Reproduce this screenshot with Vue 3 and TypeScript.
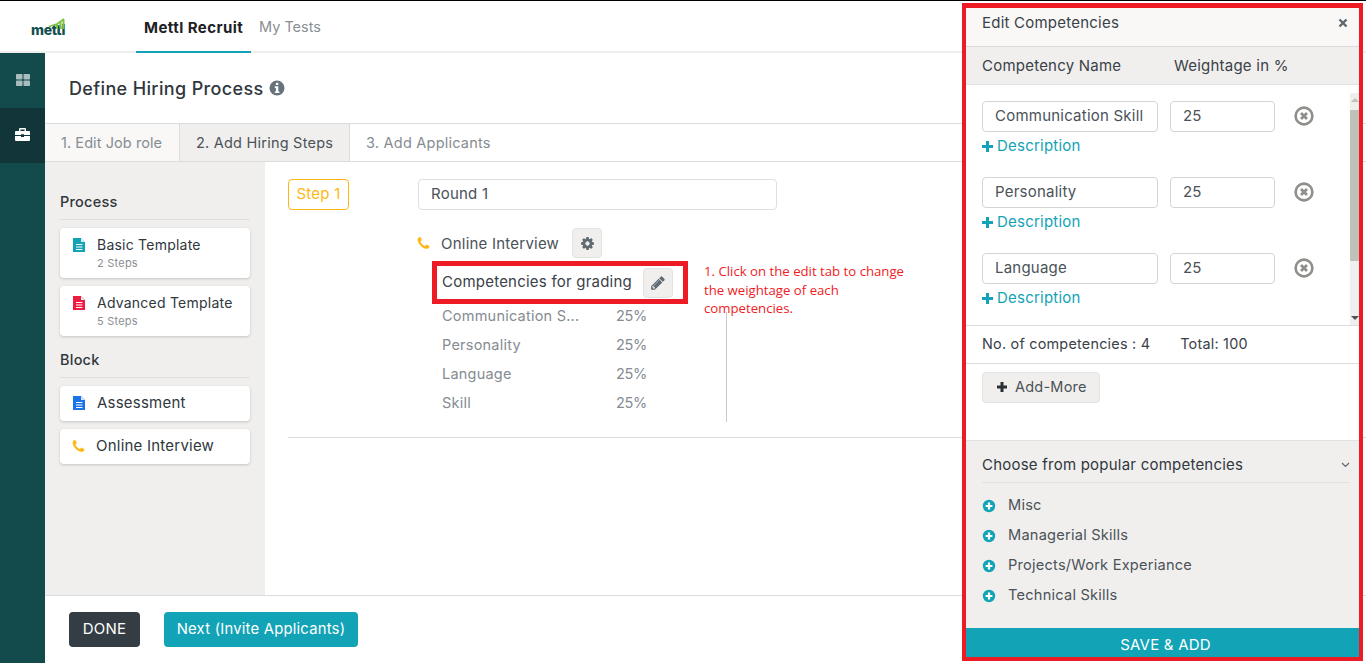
<script setup lang="ts">
import { ref } from 'vue'

interface Competency {
  name: string
  weight: number
}

const filePath = 'M2 1h8l4 4v10H2z'
const phonePath =
  'M1600 1240q0 27-10 70.5t-21 68.5q-21 50-122 106-94 51-186 51-27 0-53-3.5t-57.5-12.5-47-14.5-55.5-20.5-49-18q-98-35-175-83-127-79-264-216t-216-264q-48-77-83-175-3-9-18-49t-20.5-55.5-14.5-47-12.5-57.5-3.5-53q0-92 51-186 56-101 106-122 25-11 68.5-21t70.5-10q14 0 21 3 18 6 53 76 11 19 30 54t35 63.5 31 53.5q3 4 17.5 25t21.5 35.5 7 28.5q0 20-28.5 50t-62 55-62 53-28.5 46q0 9 5 22.5t8.5 20.5 14 24 11.5 19q76 137 174 235t235 174q2 1 19 11.5t24 14 20.5 8.5 22.5 5q18 0 46-28.5t53-62 55-62 50-28.5q14 0 28.5 7t35.5 21.5 25 17.5q25 15 53.5 31t63.5 35 54 30q70 35 76 53 3 7 3 21z'
const gearPath =
  'M1152 896q0-106-75-181t-181-75-181 75-75 181 75 181 181 75 181-75 75-181zm512-109v222q0 12-8 23t-20 13l-185 28q-19 54-39 91 35 50 107 138 10 12 10 25t-9 23q-27 37-99 108t-94 71q-12 0-26-9l-138-108q-44 23-91 38-16 136-29 186-7 28-36 28h-222q-14 0-24.5-8.5t-11.5-21.5l-28-184q-49-16-90-37l-141 107q-10 9-25 9-14 0-25-11-126-114-165-168-7-10-7-23 0-12 8-23 15-21 51-66.5t54-70.5q-27-50-41-99l-183-27q-13-2-21-12.5t-8-23.5v-222q0-12 8-23t19-13l186-28q14-46 39-92-40-57-107-138-10-12-10-24 0-10 9-23 26-36 98.5-107.5t94.5-71.5q13 0 26 10l138 107q44-23 91-38 16-136 29-186 7-28 36-28h222q14 0 24.5 8.5t11.5 21.5l28 184q49 16 90 37l142-107q9-9 24-9 13 0 25 10 129 119 165 170 7 8 7 22 0 12-8 23-15 21-51 66.5t-54 70.5q26 50 41 98l183 28q13 2 22 12.5t9 23.5z'
const pencilPath =
  'M491 1536l91-91-235-235-91 91v107h128v128h107zm523-928q0-22-22-22-10 0-17 7l-542 542q-7 7-7 17 0 22 22 22 10 0 17-7l542-542q7-7 7-17zm-54-192l416 416-832 832h-416v-416zm683 96q0 53-37 90l-166 166-416-416 166-165q36-38 90-38 53 0 91 38l235 234q37 39 37 91z'

const templates = [
  { name: 'Basic Template', steps: '2 Steps', color: '#12a3b6' },
  { name: 'Advanced Template', steps: '5 Steps', color: '#ee1c42' },
]
const weights = ref<Competency[]>([
  { name: 'Communication S...', weight: 25 },
  { name: 'Personality', weight: 25 },
  { name: 'Language', weight: 25 },
  { name: 'Skill', weight: 25 },
])
const editRows = ref<Competency[]>([
  { name: 'Communication Skill', weight: 25 },
  { name: 'Personality', weight: 25 },
  { name: 'Language', weight: 25 },
])
const popular = ['Misc', 'Managerial Skills', 'Projects/Work Experiance', 'Technical Skills']
</script>

<template>
  <div class="app">
    <header class="topbar">
      <div class="logo">
        <svg class="logo-bars" width="16" height="11" viewBox="0 0 16 11">
          <path d="M0 8.5 L8 6 L15 1" fill="none" stroke="#7cc242" stroke-width="1.6" />
          <rect x="7" y="6" width="2" height="5" fill="#7cc242" />
          <rect x="10.5" y="4" width="2" height="7" fill="#7cc242" />
          <rect x="13.5" y="1.5" width="2" height="9.5" fill="#7cc242" />
        </svg>
        <span class="logo-text">mettl</span>
      </div>
      <nav class="nav">
        <a class="nav-item active">Mettl Recruit</a>
        <a class="nav-item">My Tests</a>
      </nav>
    </header>

    <div class="body">
      <aside class="rail">
        <div class="rail-item">
          <svg width="14" height="12" viewBox="0 0 14 12" fill="#a9bcbc">
            <rect width="6.5" height="5.5" rx="0.8" />
            <rect x="7.5" width="6.5" height="5.5" rx="0.8" />
            <rect y="6.5" width="6.5" height="5.5" rx="0.8" />
            <rect x="7.5" y="6.5" width="6.5" height="5.5" rx="0.8" />
          </svg>
        </div>
        <div class="rail-item current">
          <svg width="15" height="13" viewBox="0 0 15 13" fill="#fff">
            <path d="M5 0h5a1 1 0 0 1 1 1v2H9.6V1.4H5.4V3H4V1a1 1 0 0 1 1-1z" />
            <path d="M1 3h13a1 1 0 0 1 1 1v3H9v-.8H6V7H0V4a1 1 0 0 1 1-1z" />
            <path d="M0 8h6v1h3V8h6v4a1 1 0 0 1-1 1H1a1 1 0 0 1-1-1z" />
          </svg>
        </div>
      </aside>

      <main class="main">
        <div class="title-row">
          <h1>Define Hiring Process</h1>
          <svg class="info" width="16" height="16" viewBox="0 0 16 16">
            <circle cx="8" cy="8" r="7.5" fill="#66727c" />
            <rect x="6.9" y="2.8" width="2.4" height="2.2" fill="#fff" />
            <path d="M5.8 6.3h3.5v5.2h1.1v1.6H5.8v-1.6h1.1V7.9H5.8z" fill="#fff" />
          </svg>
        </div>

        <div class="tabs">
          <div class="tab done">1. Edit Job role</div>
          <div class="tab selected">2. Add Hiring Steps</div>
          <div class="tab">3. Add Applicants</div>
        </div>

        <div class="workspace">
          <section class="palette">
            <h2>Process</h2>
            <div v-for="t in templates" :key="t.name" class="card tall">
              <svg class="doc" width="16" height="16" viewBox="0 0 16 16">
                <path :d="filePath" :fill="t.color" />
                <path d="M10 1l4 4h-4z" fill="#d8eef2" />
                <path d="M5 7.5h6.4M5 10h6.4M5 12.5h6.4" stroke="#fff" stroke-width="1.1" />
              </svg>
              <div>
                <div class="card-name">{{ t.name }}</div>
                <div class="card-sub">{{ t.steps }}</div>
              </div>
            </div>
            <h2 class="block-title">Block</h2>
            <div class="card">
              <svg class="doc" width="16" height="16" viewBox="0 0 16 16">
                <path :d="filePath" fill="#1a73e8" />
                <path d="M10 1l4 4h-4z" fill="#d8e6f8" />
                <path d="M5 7.5h6.4M5 10h6.4M5 12.5h6.4" stroke="#fff" stroke-width="1.1" />
              </svg>
              <div class="card-name block-name">Assessment</div>
            </div>
            <div class="card">
              <svg class="doc phone" width="15" height="15" viewBox="0 0 1792 1792">
                <path :d="phonePath" fill="#fdb813" />
              </svg>
              <div class="card-name block-name">Online Interview</div>
            </div>
          </section>

          <section class="canvas">
            <div class="step">
              <div class="step-head">
                <span class="step-badge">Step 1</span>
                <input class="round-input" value="Round 1" readonly />
              </div>
              <div class="step-body">
                <div class="interview-row">
                  <svg class="row-phone" width="15" height="15" viewBox="0 0 1792 1792">
                    <path :d="phonePath" fill="#fdb813" />
                  </svg>
                  <span class="interview-name">Online Interview</span>
                  <button class="icon-btn">
                    <svg width="15" height="15" viewBox="0 0 1792 1792">
                      <path :d="gearPath" fill="#5f6a72" />
                    </svg>
                  </button>
                </div>
                <div class="grading-wrap">
                  <div class="grading">
                    <span class="grading-label">Competencies for grading</span>
                    <button class="icon-btn">
                      <svg width="16" height="16" viewBox="0 0 1792 1792">
                        <path :d="pencilPath" fill="#5f6a72" />
                      </svg>
                    </button>
                  </div>
                  <p class="note">
                    1. Click on the edit tab to change<br />the weightage of each<br />competencies.
                  </p>
                </div>
                <div class="weights">
                  <div v-for="w in weights" :key="w.name" class="weight-row">
                    <span class="weight-name">{{ w.name }}</span>
                    <span class="weight-value">{{ w.weight }}%</span>
                  </div>
                </div>
              </div>
            </div>
          </section>
        </div>

        <footer class="actions">
          <button class="btn dark">DONE</button>
          <button class="btn teal">Next (Invite Applicants)</button>
        </footer>
      </main>
    </div>

    <!-- 右側抽屜，蓋在頁面上 -->
    <aside class="drawer">
      <div class="drawer-head">
        <span>Edit Competencies</span>
        <svg width="10" height="10" viewBox="0 0 10 10">
          <path d="M1.5 1.5l7 7M8.5 1.5l-7 7" stroke="#5f666c" stroke-width="2.4" />
        </svg>
      </div>
      <div class="col-head">
        <span class="col-name">Competency Name</span>
        <span>Weightage in %</span>
      </div>
      <div class="edit-area">
        <div class="edit-list">
          <div v-for="row in editRows" :key="row.name" class="edit-row">
            <div class="edit-fields">
              <input class="field name" :value="row.name" readonly />
              <input class="field weight" :value="row.weight" readonly />
              <svg class="remove" width="20" height="20" viewBox="0 0 20 20">
                <circle cx="10" cy="10" r="8.4" fill="none" stroke="#8f8f8a" stroke-width="2.6" />
                <path d="M7 7l6 6M13 7l-6 6" stroke="#8f8f8a" stroke-width="2.8" />
              </svg>
            </div>
            <a class="desc-link">
              <svg width="11" height="11" viewBox="0 0 11 11">
                <path d="M5.5 0v11M0 5.5h11" stroke="#12a3b6" stroke-width="3" />
              </svg>
              Description
            </a>
          </div>
        </div>
        <div class="scrollbar">
          <i class="arrow up"></i>
          <div class="thumb"></div>
          <i class="arrow down"></i>
        </div>
      </div>
      <div class="totals">
        <span>No. of competencies : 4</span>
        <span>Total: 100</span>
      </div>
      <div class="add-area">
        <button class="add-btn">
          <svg width="12" height="12" viewBox="0 0 12 12">
            <path d="M6 1v10M1 6h10" stroke="#2a2f33" stroke-width="3" />
          </svg>
          Add-More
        </button>
      </div>
      <div class="popular">
        <div class="popular-head">
          <span>Choose from popular competencies</span>
          <svg width="9" height="6" viewBox="0 0 9 6">
            <path d="M1 1l3.5 3.5L8 1" fill="none" stroke="#5f666c" stroke-width="1.2" />
          </svg>
        </div>
        <div v-for="p in popular" :key="p" class="popular-row">
          <svg width="14" height="14" viewBox="0 0 14 14">
            <circle cx="7" cy="7" r="6.2" fill="#12a3b6" />
            <path d="M7 3.6v6.8M3.6 7h6.8" stroke="#fff" stroke-width="2.2" />
          </svg>
          <span>{{ p }}</span>
        </div>
      </div>
      <button class="save">SAVE &amp; ADD</button>
    </aside>
  </div>
</template>

<style>
html,
body {
  margin: 0;
  background: #fff;
  overflow: hidden;
}
</style>

<style scoped>
.app {
  position: relative;
  display: flex;
  flex-direction: column;
  height: 662px;
  border-top: 1px solid #000;
  overflow: hidden;
  font-family: Inter, 'Open Sans', sans-serif;
  font-size: 15px;
  letter-spacing: 0.015em;
  color: #3a4148;
}
button,
input {
  font: inherit;
  letter-spacing: inherit;
}

.topbar {
  display: flex;
  flex: 0 0 52px;
  box-shadow: inset 0 -2px 0 #eeeeec;
}
.logo {
  position: relative;
  width: 136px;
  padding: 19px 0 0 31px;
  box-sizing: border-box;
}
.logo-bars {
  position: absolute;
  left: 49px;
  top: 17px;
}
.logo-text {
  font-weight: 800;
  font-size: 14px;
  letter-spacing: -0.02em;
  color: #134f50;
}
.nav {
  display: flex;
}
.nav-item {
  padding: 17px 8px 0;
  font-size: 14.5px;
  letter-spacing: 0;
  white-space: nowrap;
  color: #8a8f94;
}
.nav-item.active {
  width: 115px;
  box-sizing: border-box;
  height: 52px;
  border-bottom: 2px solid #12a3b6;
  font-size: 15px;
  letter-spacing: 0.03em;
  font-weight: 700;
  color: #1d2125;
}

.body {
  display: flex;
  flex: 1;
  min-height: 0;
}
.rail {
  flex: 0 0 45px;
  background: #134a4c;
}
.rail-item {
  display: flex;
  align-items: center;
  justify-content: center;
  height: 55px;
  box-sizing: border-box;
  padding-bottom: 2px;
}
.rail-item.current {
  background: #12353a;
}

.main {
  display: flex;
  flex-direction: column;
  flex: 1;
  min-width: 0;
}
.title-row {
  display: flex;
  align-items: center;
  gap: 5px;
  flex: 0 0 70px;
  padding-left: 24px;
}
h1 {
  margin: 0;
  font-size: 18px;
  font-weight: 500;
  letter-spacing: 0.02em;
  color: #30373d;
}
.tabs {
  display: flex;
  flex: 0 0 39px;
  box-sizing: border-box;
  border-top: 1px solid #dcdcdc;
  border-bottom: 1px solid #dcdcdc;
}
.tab {
  display: flex;
  align-items: center;
  padding: 0 16px 1px;
  font-size: 14.5px;
  white-space: nowrap;
  color: #858c92;
}
.tab.done {
  width: 135px;
  box-sizing: border-box;
  background: #f9f8f6;
  border-right: 1px solid #dcdcdc;
  letter-spacing: 0.005em;
}
.tab.selected {
  width: 170px;
  box-sizing: border-box;
  background: #f0efed;
  border-right: 1px solid #dcdcdc;
  color: #4b5258;
}

.workspace {
  display: flex;
  flex: 1;
  min-height: 0;
}
.palette {
  flex: 0 0 220px;
  box-sizing: border-box;
  padding: 31px 15px 0;
  background: #f0efed;
}
h2 {
  margin: 0 0 8px;
  padding-bottom: 8px;
  border-bottom: 1px solid #e0dfdd;
  font-size: 14.5px;
  line-height: 18px;
  font-weight: 500;
  color: #30373d;
}
.block-title {
  margin-top: 15px;
}
.card {
  display: flex;
  align-items: center;
  gap: 10px;
  height: 35px;
  box-sizing: border-box;
  margin-bottom: 8px;
  padding: 0 0 1px 13px;
  border-radius: 4px;
  background: #fff;
  box-shadow: 0 1px 3px rgba(0, 0, 0, 0.18);
}
.card.tall {
  height: 50px;
  align-items: flex-start;
  padding-top: 9px;
}
.doc {
  flex: none;
  margin-left: -2px;
}
.card-name {
  font-size: 14px;
  line-height: 16px;
  color: #30373d;
}
.card-name.block-name {
  font-size: 15px;
}
.card-sub {
  margin-top: 3px;
  font-size: 11px;
  line-height: 14px;
  color: #8a8f94;
}

.canvas {
  flex: 1;
  padding: 17px 0 0 23px;
  min-width: 0;
}
.step {
  height: 259px;
  box-sizing: border-box;
  border-bottom: 1px solid #dcdcdc;
}
.step-head {
  display: flex;
  gap: 69px;
}
.step-badge {
  display: flex;
  align-items: center;
  justify-content: center;
  width: 61px;
  height: 31px;
  box-sizing: border-box;
  padding-bottom: 2px;
  border: 1px solid #fdb813;
  border-radius: 4px;
  color: #fdb813;
}
.round-input {
  width: 359px;
  height: 31px;
  box-sizing: border-box;
  padding: 0 12px 2px;
  border: 1px solid #dfdfdf;
  border-radius: 4px;
  color: #4b5258;
  outline: none;
}
.step-body {
  margin-left: 129px;
  padding-top: 18px;
}
.interview-row {
  display: flex;
  align-items: center;
  height: 30px;
}
.row-phone {
  margin-left: -1px;
}
.interview-name {
  width: 131px;
  margin-left: 10px;
  color: #4b5258;
}
.icon-btn {
  display: flex;
  align-items: center;
  justify-content: center;
  width: 30px;
  height: 30px;
  padding: 0;
  border: 1px solid #e2e2e0;
  border-radius: 4px;
  background: #f0efed;
}
.grading-wrap {
  display: flex;
  margin: 3px 0 0 15px;
}
.grading {
  display: flex;
  align-items: center;
  justify-content: space-between;
  width: 256px;
  height: 43px;
  box-sizing: border-box;
  padding: 0 10px 0 5px;
  border: 5px solid #ed1c24;
}
.grading-label {
  margin-top: -2px;
  color: #3a4148;
}
.note {
  margin: 0 0 0 16px;
  font-family: 'Open Sans', sans-serif;
  font-size: 13.2px;
  line-height: 18.5px;
  letter-spacing: 0;
  color: #ee1c25;
  padding-top: 1px;
  height: 0;
  white-space: nowrap;
}
.weights {
  position: relative;
  width: 309px;
  margin: -3px 0 0 25px;
  font-size: 14.5px;
}
.weights::after {
  content: '';
  position: absolute;
  left: 284px;
  top: 11px;
  height: 110px;
  border-left: 1px solid #c9c9c9;
}
.weight-row {
  display: flex;
  align-items: center;
  height: 29px;
  color: #858c92;
}
.weight-name {
  width: 174px;
}
.weight-value {
  letter-spacing: -0.02em;
}

.actions {
  display: flex;
  align-items: flex-start;
  gap: 24px;
  flex: 0 0 68px;
  box-sizing: border-box;
  padding: 16px 0 0 24px;
  border-top: 1px solid #dcdcdc;
}
.btn {
  height: 35px;
  padding: 0 0 2px;
  border: 0;
  border-radius: 4px;
  color: #fff;
}
.btn.dark {
  width: 71px;
  background: #343d44;
}
.btn.teal {
  width: 194px;
  font-size: 14.8px;
  background: #12a3b6;
}

.drawer {
  position: absolute;
  left: 962px;
  top: 2px;
  width: 401px;
  height: 658px;
  box-sizing: border-box;
  display: flex;
  flex-direction: column;
  border: 5px solid #ed1c24;
  border-width: 5px 4px 4px;
  background: #fff;
}
.drawer-head {
  display: flex;
  align-items: center;
  justify-content: space-between;
  flex: 0 0 39px;
  box-sizing: border-box;
  padding: 0 11px 9px 16px;
  background: #f9f8f6;
  border-bottom: 1px solid #dcdcdc;
  color: #3a4148;
}
.col-head {
  display: flex;
  align-items: center;
  flex: 0 0 38px;
  box-sizing: border-box;
  padding: 0 0 1px 16px;
  background: #f0efed;
  border-bottom: 1px solid #e2e2e2;
}
.col-name {
  width: 192px;
}
.edit-area {
  display: flex;
  flex: 0 0 241px;
  box-sizing: border-box;
  border-bottom: 1px solid #dcdcdc;
  overflow: hidden;
}
.edit-list {
  flex: 1;
  padding: 16px 0 0 16px;
}
.edit-row {
  height: 76px;
}
.edit-fields {
  display: flex;
  align-items: center;
}
.field {
  height: 31px;
  box-sizing: border-box;
  border: 1px solid #d4d4d2;
  border-radius: 4px;
  padding: 0 12px 2px;
  color: #4b5258;
  outline: none;
}
.field.name {
  width: 176px;
}
.field.weight {
  width: 105px;
  margin-left: 12px;
}
.remove {
  margin: -2px 0 0 19px;
}
.desc-link {
  display: flex;
  align-items: center;
  gap: 4px;
  margin-top: 5px;
  line-height: 18px;
  color: #12a3b6;
}
.scrollbar {
  position: relative;
  flex: 0 0 9px;
  margin-top: 8px;
  background: #f0efed;
}
.thumb {
  margin-top: 17px;
  height: 151px;
  background: #c1c0b9;
}
.arrow {
  position: absolute;
  left: 1px;
  border-left: 4px solid transparent;
  border-right: 4px solid transparent;
}
.arrow.up {
  top: 5px;
  border-bottom: 4px solid #c1c0b9;
}
.arrow.down {
  bottom: 5px;
  border-top: 4px solid #4b5258;
}
.totals {
  display: flex;
  align-items: center;
  gap: 30px;
  flex: 0 0 38px;
  box-sizing: border-box;
  padding: 0 0 3px 16px;
  border-bottom: 1px solid #dcdcdc;
  font-size: 14.4px;
}
.add-area {
  flex: 0 0 76px;
  box-sizing: border-box;
  padding: 8px 0 0 16px;
}
.add-btn {
  display: flex;
  align-items: center;
  gap: 7px;
  width: 118px;
  height: 31px;
  padding: 0 0 2px 13px;
  border: 1px solid #e2e2e0;
  border-radius: 4px;
  background: #f0efed;
  font-size: 14.5px;
  color: #4b5258;
}
.popular {
  flex: 1;
  padding: 0 9px 0 16px;
  background: #f1efee;
  border-top: 1px solid #dfe2e4;
}
.popular-head {
  display: flex;
  align-items: center;
  justify-content: space-between;
  height: 42px;
  box-sizing: border-box;
  margin-bottom: 7px;
  padding-top: 6px;
  border-bottom: 1px solid #e2e2e2;
  color: #30373d;
}
.popular-row {
  display: flex;
  align-items: center;
  gap: 12px;
  height: 30px;
  font-size: 14.6px;
  color: #4b5258;
}
.popular-row svg {
  margin-top: 2px;
}
.save {
  flex: 0 0 29px;
  padding: 4px 0 0 6px;
  border: 0;
  background: #12a3b6;
  color: #fff;
}
</style>
